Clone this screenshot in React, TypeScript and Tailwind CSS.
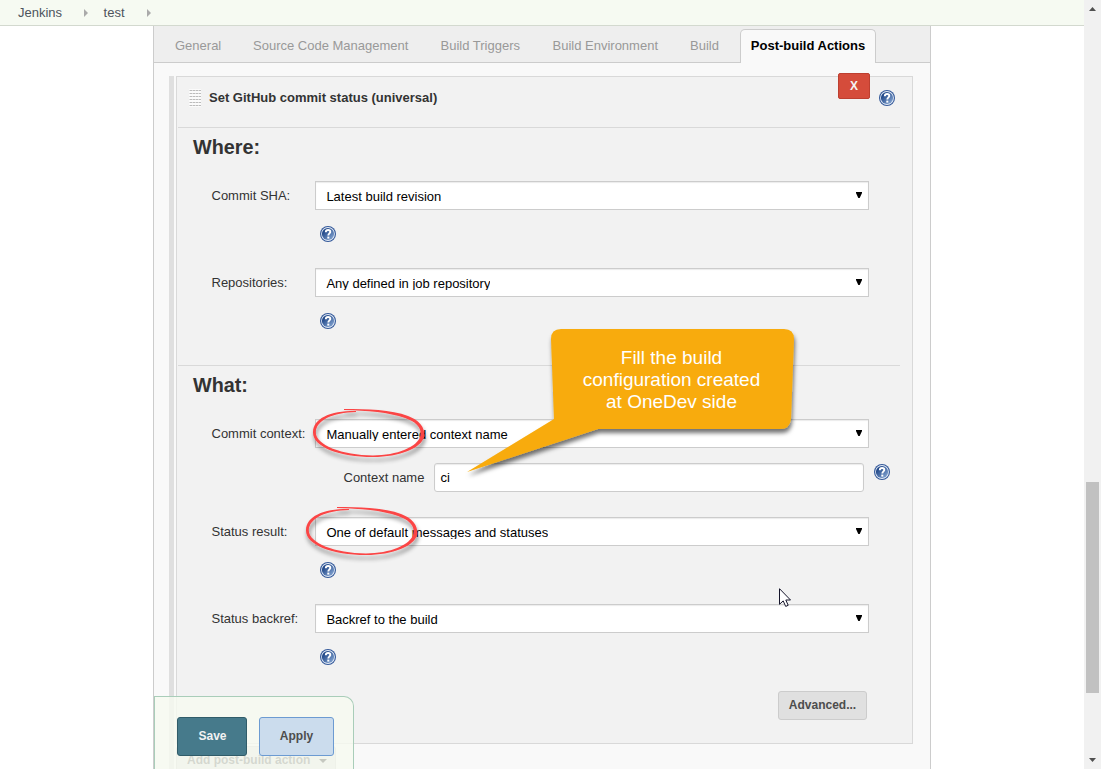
import React from "react";

function HelpIcon({ className = "" }: { className?: string }) {
  return (
    <svg width="16" height="16" viewBox="0 0 16 16" className={"block shrink-0 " + className}>
      <defs>
        <linearGradient id="helpFill" x1="0" y1="0" x2="1" y2="1">
          <stop offset="0.2" stopColor="#1f4687" />
          <stop offset="0.95" stopColor="#8aaad6" />
        </linearGradient>
      </defs>
      <circle cx="8" cy="8" r="8" fill="#34599a" />
      <circle cx="8" cy="8" r="6.9" fill="#e6edf7" />
      <circle cx="8" cy="8" r="6.1" fill="url(#helpFill)" />
      <path
        d="M5.8 6.2C5.800 4.700 6.700 4 8.100 4C9.500 4 10.300 4.800 10.300 5.900C10.300 7.400 8.300 7.500 8.300 9.600"
        fill="none"
        stroke="#fff"
        strokeWidth="1.9"
      />
      <rect x="7.3" y="10.6" width="2" height="2" fill="#fff" />
    </svg>
  );
}

function SelectBox({ text }: { text: string }) {
  return (
    <div className="flex h-[29px] w-[554px] shrink-0 justify-between border border-[#ccc] bg-white pl-[10.400px] pr-[6px] shadow-[inset_0_1px_1px_rgba(0,0,0,0.08)]">
      <span className="mt-[6px] h-[15px] overflow-hidden text-[13px] leading-[17px] text-black">{text}</span>
      <svg width="6" height="7" viewBox="0 0 6 7" className="mt-[10px] block">
        <path d="M0 0H6V1L3.700 6H2.300L0 1Z" fill="#000" />
      </svg>
    </div>
  );
}

function Field({ label, text, help = true }: { label: string; text: string; help?: boolean }) {
  return (
    <div className={help ? "h-[87px]" : "h-[44px]"}>
      <div className="flex">
        <span className="w-[104px] shrink-0 whitespace-nowrap pl-[0.500px] pt-[6px] text-[13px] leading-[17px] text-[#333]">{label}</span>
        <SelectBox text={text} />
      </div>
      {help && <HelpIcon className="ml-[109px] mt-4" />}
    </div>
  );
}

function Oval() {
  return (
    <svg width="126" height="66" viewBox="0 0 126 66" className="block">
      <defs>
        <filter id="ovalShadow" x="-20%" y="-20%" width="150%" height="160%">
          <feDropShadow dx="1" dy="4" stdDeviation="2" floodColor="#000" floodOpacity="0.45" />
        </filter>
      </defs>
      <g filter="url(#ovalShadow)" fill="#fb4545">
        <path
          fillRule="evenodd"
          d="M38 4C61 4 85 4.500 102 11C113 15 119 22 118.300 31C116 43 94 52 67 52C33 52 7 42 7 27.500C7 13 25 5.800 50 6.100L50 6.900C27 7.500 9.800 15 9.800 27.500C9.800 40 36 50.400 67 50.400C91 50.400 112 42 114.500 30.500C116 22 109 16.500 99 13C83 7 61 5.600 38 4.900Z"
        />
      </g>
    </svg>
  );
}

const tabs = [
  { name: "General", width: "w-[78px]" },
  { name: "Source Code Management", width: "w-[187.500px]" },
  { name: "Build Triggers", width: "w-[112px]" },
  { name: "Build Environment", width: "w-[137.500px]" },
  { name: "Build", width: "w-[50px]" },
];

function Crumb({ name }: { name: string }) {
  return (
    <div className="flex items-center gap-[22px]">
      <span>{name}</span>
      <svg width="4" height="8" viewBox="0 0 4 8" className="mt-[1px] block">
        <path d="M0 0L4 4L0 8Z" fill="#aaa" />
      </svg>
    </div>
  );
}

export default function App() {
  return (
    <div className="relative flex h-[769px] w-[1101px] overflow-hidden bg-white font-['Liberation_Sans',Arial,sans-serif] text-[13px] leading-[17px] text-[#333]">
      <div className="flex w-[1084px] flex-col">
        <header className="flex h-[26px] shrink-0 items-center gap-[15.500px] border-b border-[#d3d9cf] bg-[#f6faf2] pl-[18px] text-[13px] text-[#4d545d]">
          <Crumb name="Jenkins" />
          <Crumb name="test" />
        </header>

        <main className="ml-[153px] flex w-[778px] grow flex-col border-x border-[#ccc] bg-[#f9f9f9]">
          <nav className="flex h-[37px] shrink-0 border-b border-[#ccc] bg-[#eee] pl-[21px] text-[#999]">
            {tabs.map((t) => (
              <span key={t.name} className={"shrink-0 whitespace-nowrap pt-[11px] " + t.width}>
                {t.name}
              </span>
            ))}
            <span className="mt-[3px] h-[34px] w-[136px] shrink-0 whitespace-nowrap rounded-t-[5px] border border-b-0 border-[#ccc] bg-[#f9f9f9] pt-[7px] text-center font-bold text-black">
              Post-build Actions
            </span>
          </nav>

          <div className="mt-[13px] flex h-[693px] shrink-0">
            <div className="ml-[15px] w-[5px] shrink-0 bg-[#dfdfdf]" />
            <div className="ml-[2px] w-[737px] shrink-0">
              <section className="h-[668px] border border-[#d9d9d9] bg-[#f2f2f2]">
                <div className="ml-px flex h-[51px] w-[722px] border-b border-[#d9d9d9] pl-[11px]">
                  <svg width="12" height="18" viewBox="0 0 12 18" className="mt-[12px] block shrink-0">
                    <defs>
                      <pattern id="grip" width="3" height="3" patternUnits="userSpaceOnUse">
                        <rect width="3" height="3" fill="#fbfbfb" />
                        <rect x="0" y="1" width="3" height="1" fill="#dedede" />
                        <rect x="1" y="1" width="2" height="1" fill="#bcbcbc" />
                      </pattern>
                    </defs>
                    <rect width="12" height="18" fill="url(#grip)" />
                  </svg>
                  <span className="ml-2 mt-[12px] w-[629px] font-bold">Set GitHub commit status (universal)</span>
                  <button className="-mt-[4px] flex h-[26px] w-8 shrink-0 items-center justify-center rounded-[2px] border border-[#bd3f30] bg-[#d54c3b] text-[12px] font-bold text-[#f4f4f4]">
                    X
                  </button>
                  <HelpIcon className="ml-[9px] mt-[13px]" />
                </div>

                <div className="ml-px h-[238px] w-[722px] border-b border-[#d9d9d9]">
                  <h2 className="pl-[15px] pt-[7px] text-[19.800px] font-bold leading-6">Where:</h2>
                  <div className="ml-[33px] mt-[22px]">
                    <Field label="Commit SHA:" text="Latest build revision" />
                    <Field label="Repositories:" text="Any defined in job repository" />
                  </div>
                </div>

                <div className="ml-px">
                  <h2 className="pl-[15px] pt-[7px] text-[19.800px] font-bold leading-6">What:</h2>
                  <div className="ml-[33px] mt-[22px]">
                    <Field label="Commit context:" text="Manually entered context name" help={false} />
                    <div className="flex h-[54px] pl-[132.500px]">
                      <span className="w-[90.500px] pt-[6px]">Context name</span>
                      <div className="h-[29px] w-[430px] shrink-0 rounded-[3px] border border-[#ccc] bg-white pl-[5.500px] pt-[5px] text-black shadow-[inset_0_1px_1px_rgba(0,0,0,0.08)]">
                        ci
                      </div>
                      <HelpIcon className="ml-[10px] mt-px" />
                    </div>
                    <Field label="Status result:" text="One of default messages and statuses" />
                    <Field label="Status backref:" text="Backref to the build" />
                  </div>
                  <button className="ml-[600px] block h-[29px] w-[89px] rounded-[3px] border border-[#ccc] bg-[#e0e0e0] pb-px text-[12px] font-bold text-[#4d4d4d]">
                    Advanced...
                  </button>
                </div>
              </section>
              <button className="mt-[2px] flex h-[30px] w-[160px] items-center gap-[8px] rounded-[3px] border border-[#ccc] bg-[#e0e0e0] pb-[2px] pl-[10px] text-[12px] font-bold text-[#4d4d4d]">
                <span className="w-[124px] whitespace-nowrap text-left">Add post-build action</span>
                <svg width="8" height="4" viewBox="0 0 8 4" className="mt-[2px] block">
                  <path d="M0 0H8L4 4Z" fill="#000" />
                </svg>
              </button>
            </div>
          </div>
        </main>
      </div>

      <aside className="flex w-[17px] flex-col items-center bg-[#f1f1f1]">
        <svg width="7" height="4" viewBox="0 0 7 4" className="mt-[7px] block">
          <path d="M3.500 0L7 4H0Z" fill="#505050" />
        </svg>
        <div className="mt-[471px] h-[211px] w-[13px] bg-[#c1c1c1]" />
        <svg width="7" height="4" viewBox="0 0 7 4" className="mt-[65px] block">
          <path d="M0 0H7L3.500 4Z" fill="#505050" />
        </svg>
      </aside>

      <div className="absolute bottom-0 left-[154px] flex h-[73px] w-[200px] gap-3 rounded-tr-[10px] border border-b-0 border-[#a9cdb9] bg-[#f6faf0]/80 pl-[22px] pt-5 text-[12px] font-bold">
        <button className="h-[39px] w-[70px] rounded-[3px] border border-[#305c69] bg-[#467a8b] pl-px text-[#f2f2f2]">Save</button>
        <button className="h-[39px] w-[75px] rounded-[3px] border border-[#6c9bd2] bg-[#cbdced] text-[#4d4d4d]">Apply</button>
      </div>

      <div className="absolute left-[306px] top-[405px]">
        <Oval />
      </div>
      <div className="absolute left-[299px] top-[503px]">
        <Oval />
      </div>

      <div className="absolute left-[460px] top-[320px] h-[165px] w-[350px]">
        <svg width="350" height="165" viewBox="0 0 350 165" className="block">
          <defs>
            <filter id="calloutShadow" x="-5%" y="-5%" width="112%" height="115%">
              <feDropShadow dx="1" dy="4" stdDeviation="2.200" floodColor="#000" floodOpacity="0.55" />
            </filter>
          </defs>
          <path
            filter="url(#calloutShadow)"
            d="M101 9H324Q334 9 334 19L331 99Q330 109 320 109H138L7 152L94 99L91 19Q91 9 101 9Z"
            fill="#f8ab0a"
          />
        </svg>
        <p className="absolute left-[91.500px] top-[27px] w-[240px] text-center text-[19px] leading-[22px] text-white">
          Fill the build
          <br />
          configuration created
          <br />
          at OneDev side
        </p>
      </div>

      <svg width="13" height="20" viewBox="0 0 13 20" className="absolute left-[779px] top-[588px]">
        <path d="M0.500 0.700V16.300L4.200 12.900L6.700 18.400L9.200 17.300L6.800 12H11.500Z" fill="#fff" stroke="#14142a" strokeWidth="1" />
      </svg>
    </div>
  );
}
